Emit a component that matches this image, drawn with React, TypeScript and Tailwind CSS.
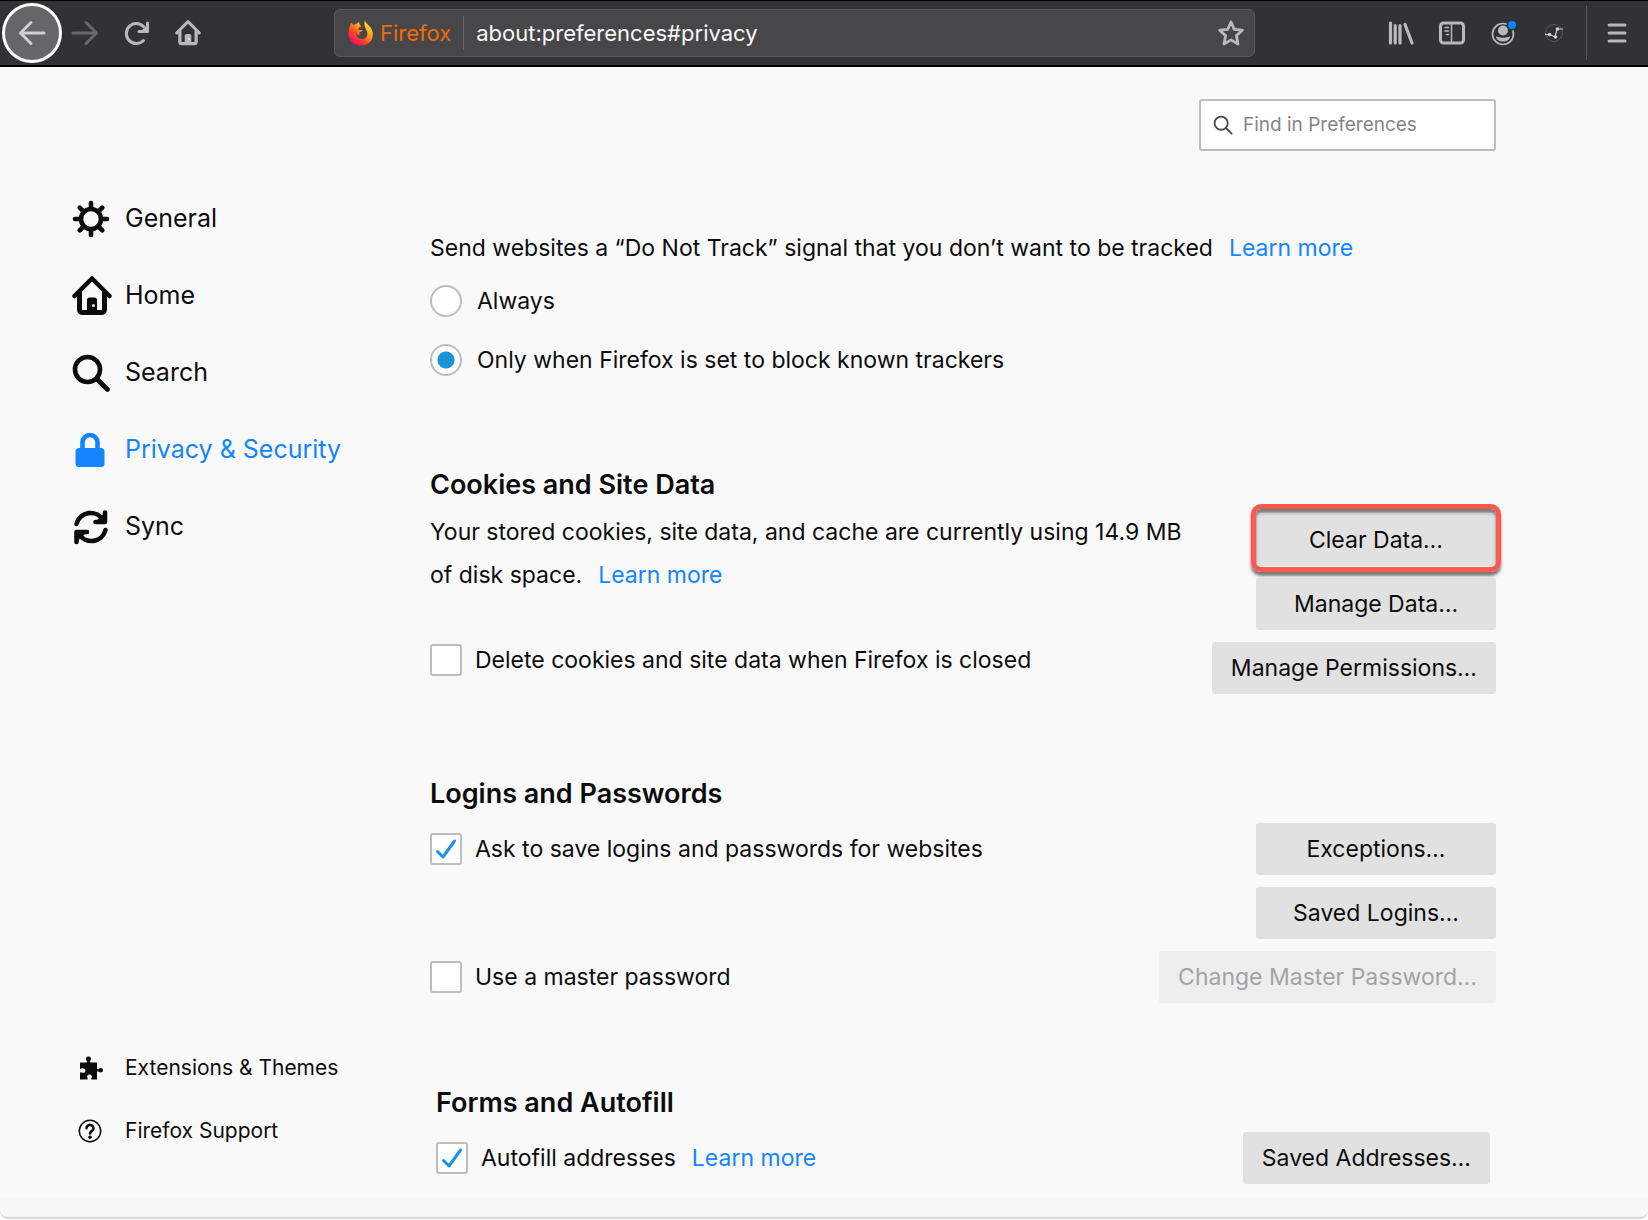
import React, { useState } from 'react';

const uiFont = 'font-[Inter,"Liberation_Sans",sans-serif]';

const HomeIcon = ({ size }: { size: number }) => (
  <svg width={size} height={size} viewBox="0 0 40 40" fill="none" stroke="currentColor" strokeLinecap="round" strokeLinejoin="round">
    <path d="M2.5 20 20 2.5 37.5 20" strokeWidth="4.5" />
    <path d="M7.5 17v16.5a3 3 0 0 0 3 3h19a3 3 0 0 0 3-3V17" strokeWidth="5" />
    <path d="M15 36V24a2.500 2.500 0 0 1 2.500-2.500h5A2.500 2.500 0 0 1 25 24v12z" fill="currentColor" stroke="none" />
    <circle cx="21.5" cy="29.5" r="1.5" fill="#e8e8e8" stroke="none" />
  </svg>
);

const GearIcon = () => (
  <svg width="38" height="38" viewBox="0 0 38 38" fill="none" stroke="currentColor" strokeLinecap="round" strokeWidth="4.6">
    <circle cx="19" cy="19" r="10" />
    <path d="M19 3v4M19 31v4M3 19h4M31 19h4M7.700 7.700l3 3M27.300 27.300l3 3M30.300 7.700l-3 3M10.700 27.300l-3 3" />
  </svg>
);

const SearchIcon = ({ size, weight }: { size: number; weight: number }) => (
  <svg width={size} height={size} viewBox="0 0 38 38" fill="none" stroke="currentColor" strokeLinecap="round" strokeWidth={weight}>
    <circle cx="15.5" cy="15.5" r="12.5" />
    <path d="M25 25l10.500 10.500" />
  </svg>
);

const LockIcon = () => (
  <svg width="38" height="38" viewBox="0 0 38 38">
    <path d="M10.500 18v-6.500a7.500 7.500 0 0 1 15 0V18" fill="none" stroke="currentColor" strokeWidth="4.6" />
    <rect x="3.5" y="17" width="29" height="19" rx="3.5" fill="currentColor" />
  </svg>
);

const SyncIcon = () => (
  <svg width="38" height="38" viewBox="0 0 38 38" fill="none" stroke="currentColor" strokeLinecap="round" strokeLinejoin="round" strokeWidth="4.6">
    <path d="M4.500 16A14.500 14.500 0 0 1 31 12" />
    <path d="M33 4.500V14H23z" fill="currentColor" strokeWidth="0" />
    <path d="M33 4.500V14H23.500" />
    <path d="M33.500 22A14.500 14.500 0 0 1 7 26" />
    <path d="M4.500 34v-10H15z" fill="currentColor" strokeWidth="0" />
    <path d="M4.500 34v-10H15" />
  </svg>
);

const PuzzleIcon = () => (
  <svg width="24" height="24" viewBox="0 0 24 24" fill="currentColor">
    <path d="M1 6.500h6c1.300 0 1.300-.8.800-1.500C6 2.500 7.500.5 9.500.5s3.500 2 1.700 4.500c-.5.700-.5 1.500.8 1.500h6v6c0 1 .8 1 1.500.5 2-1.700 4.500-1 4.500 1.200s-2.500 3-4.500 1.300c-.7-.5-1.500-.5-1.500.5v7.500h-5c-1 0-1-.8-.5-1.500 1-1.500 0-3.500-2-3.500s-3 2-2 3.500c.5.700.5 1.500-.5 1.500H1v-6.500c0-1 .8-1 1.500-.5 2 1 4-.2 4-2s-2-3-4-2c-.7.500-1.500.5-1.500-.5z" />
  </svg>
);

const HelpIcon = () => (
  <svg width="24" height="24" viewBox="0 0 24 24" fill="none" stroke="currentColor" strokeLinecap="round">
    <circle cx="12" cy="12" r="10.7" strokeWidth="1.5" />
    <path d="M8.500 9.200a3.500 3.300 0 1 1 5.300 2.800c-1.200.7-1.800 1.200-1.800 2.500" strokeWidth="2.6" />
    <circle cx="12" cy="18.2" r="1.8" fill="currentColor" stroke="none" />
  </svg>
);

const FirefoxLogo = () => (
  <svg width="26" height="26" viewBox="0 0 26 26">
    <defs>
      <linearGradient id="flame" x1="0.85" y1="0.1" x2="0.2" y2="0.9">
        <stop offset="0" stopColor="#ffe226" />
        <stop offset="0.35" stopColor="#ffa01a" />
        <stop offset="0.65" stopColor="#ff4a2a" />
        <stop offset="1" stopColor="#ff0a5e" />
      </linearGradient>
    </defs>
    <path d="M17 .5c.5 2.500 4 4.500 6 7.500 4.500 7.500.5 17.500-10 17.500C5 25.500.5 20 .5 13.500.5 9 2 6 3 2.500L5.500 5C7.500 4 9.500 3.500 11 1.500c0 2 .5 3 2.500 5-2 .5-3.500 1.500-3 3.500h4c-.5 1.500-2 2-3 2.500-.5 1 0 2 1 2.500-1.500.5-3.500 0-4.500-1.500.5 4 3.500 5.500 6 5.500 5 0 6.500-4.500 4.500-8.500C17 7.500 15.500 4.500 17 .5z" fill="url(#flame)" />
  </svg>
);

const LibraryIcon = () => (
  <svg width="26" height="26" viewBox="0 0 26 26" stroke="currentColor" strokeWidth="3.2" strokeLinecap="round">
    <path d="M2.500 3v20M7.200 5.500v17.500M12 5.500v17.500M17 4.500l7 18.500" />
  </svg>
);

const SidebarIcon = () => (
  <svg width="26" height="26" viewBox="0 0 26 26" fill="none" stroke="currentColor" strokeLinecap="round">
    <rect x="1.5" y="3" width="23" height="20" rx="3" strokeWidth="3" />
    <path d="M12.500 3v20M6 7.500h3.500M6 11h3.500M7.500 14.500h2" strokeWidth="1.5" />
  </svg>
);

const AccountIcon = () => (
  <svg width="26" height="26" viewBox="0 0 26 26" fill="none">
    <circle cx="12" cy="14" r="10.5" stroke="currentColor" strokeWidth="1.7" />
    <circle cx="12" cy="10.5" r="5" fill="currentColor" />
    <path d="M5 16.500c1.500 0 2.500 1.200 7 1.200s5.500-1.200 7-1.200c0 3-3.500 5-7 5s-7-2-7-5z" fill="currentColor" />
    <circle cx="21" cy="5" r="5.5" fill="#323234" />
    <circle cx="21" cy="5" r="4" fill="#0a84ff" />
  </svg>
);

const GraphIcon = () => (
  <svg width="20" height="20" viewBox="0 0 20 20" fill="none">
    <circle cx="10" cy="10" r="8.5" stroke="#58585a" />
    <path d="M1 11.500h5l5 2.500 2-8h6" stroke="#d0d0d2" strokeWidth="1.2" />
    <circle cx="5.5" cy="11.5" r="1.8" fill="#d0d0d2" />
    <circle cx="11.5" cy="14" r="1.8" fill="#d0d0d2" />
    <circle cx="13.5" cy="6" r="1.8" fill="#d0d0d2" />
  </svg>
);

const navItems = [
  { label: 'General', icon: <GearIcon /> },
  { label: 'Home', icon: <HomeIcon size={40} /> },
  { label: 'Search', icon: <SearchIcon size={38} weight={4.6} /> },
  { label: 'Privacy & Security', icon: <LockIcon /> },
  { label: 'Sync', icon: <SyncIcon /> },
];

const Toolbar = () => (
  <header className="flex h-[67px] shrink-0 items-center border-t border-b-2 border-black bg-[#323234] text-[#b9b9bb]">
    <div className="flex items-center">
      <button aria-label="Back" className="ml-[2px] flex size-[60px] items-center justify-center rounded-full border-[3px] border-white bg-[#666668] text-[#d0d0d2]">
        <svg width="28" height="26" viewBox="0 0 28 26" fill="none" stroke="currentColor" strokeWidth="3" strokeLinecap="round" strokeLinejoin="round">
          <path d="M26 13H2.500M13 2.500 2.500 13 13 23.500" />
        </svg>
      </button>
      <button aria-label="Forward" className="ml-[9px] text-[#68686a]">
        <svg width="28" height="26" viewBox="0 0 28 26" fill="none" stroke="currentColor" strokeWidth="3" strokeLinecap="round" strokeLinejoin="round">
          <path d="M2 13h23.500M15 2.500 25.500 13 15 23.500" />
        </svg>
      </button>
      <button aria-label="Reload" className="ml-[25px]">
        <svg width="26" height="26" viewBox="0 0 26 26" fill="none" stroke="currentColor" strokeWidth="3" strokeLinecap="round" strokeLinejoin="round">
          <path d="M19.500 20.500A10 10 0 1 1 19.500 6.500" />
          <path d="M23.500 3v8.500H15" />
          <path d="M24 4v8h-8z" fill="currentColor" strokeWidth="0" />
        </svg>
      </button>
      <button aria-label="Home" className="ml-[25px]"><HomeIcon size={26} /></button>
    </div>
    <div className="ml-[133px] flex h-12 w-[921px] items-center rounded-md border border-[#5a5a5c] bg-[#474749] pr-[10px] pl-[13px]">
      <FirefoxLogo />
      <span className="ml-[6px] text-[22px] text-[#ee6a0b]">Firefox</span>
      <span className="mx-3 h-[34px] w-px bg-[#66666e]" />
      <input aria-label="Address" defaultValue="about:preferences#privacy" className="min-w-0 flex-1 bg-transparent text-[22px] text-[#f9f9fa] outline-none" />
      <button aria-label="Bookmark this page">
        <svg width="26" height="26" viewBox="0 0 26 26" fill="none" stroke="currentColor" strokeWidth="2.8" strokeLinejoin="round">
          <path d="M13 2l3.300 7.300 8 .9-5.900 5.400 1.600 8.400-7-4.100L6 24l1.600-8.400-5.900-5.400 8-.9z" />
        </svg>
      </button>
    </div>
    <div className="ml-auto flex h-full items-center">
      <button aria-label="Library"><LibraryIcon /></button>
      <button aria-label="Sidebars" className="ml-[25px]"><SidebarIcon /></button>
      <button aria-label="Account" className="ml-[26px]"><AccountIcon /></button>
      <button aria-label="Graph" className="ml-[27px]"><GraphIcon /></button>
      <span className="ml-[22px] h-[54px] w-px bg-[#58585a]" />
      <button aria-label="Menu" className="mr-[21px] ml-5">
        <svg width="20" height="22" viewBox="0 0 20 22" stroke="currentColor" strokeWidth="3" strokeLinecap="round">
          <path d="M2 3h16M2 11h16M2 19h16" />
        </svg>
      </button>
    </div>
  </header>
);

const LearnMore = () => <a href="#learn" className="ml-4 text-[#1485ff]">Learn more</a>;

const PrefButton = ({ children, disabled }: { children: React.ReactNode; disabled?: boolean }) => (
  <button
    disabled={disabled}
    className="h-[52px] min-w-[240px] rounded-[3px] bg-[#e1e1e2] px-[19px] whitespace-nowrap disabled:bg-[#eeeeee] disabled:text-[#a3a3a5]"
  >
    {children}
  </button>
);

const Checkbox = ({ label, defaultChecked }: { label: string; defaultChecked?: boolean }) => {
  const [checked, setChecked] = useState(!!defaultChecked);

  return (
    <label className="flex items-center gap-[13px] leading-8">
      <span className="relative flex size-8">
        <input
          type="checkbox"
          checked={checked}
          onChange={() => setChecked(!checked)}
          className="size-8 appearance-none rounded-[3px] border-2 border-[#bdbdbe] bg-white"
        />
        {checked && (
          <svg className="pointer-events-none absolute inset-0" width="32" height="32" viewBox="0 0 32 32" fill="none" stroke="#1a94e0" strokeWidth="3" strokeLinecap="round" strokeLinejoin="round">
            <path d="M7.500 18.500l5.500 5.500L24.500 8" />
          </svg>
        )}
      </span>
      {label}
    </label>
  );
};

const Radio = ({ label, defaultChecked }: { label: string; defaultChecked?: boolean }) => (
  <label className="flex items-center gap-[15px] leading-8">
    <input
      type="radio"
      name="dnt"
      defaultChecked={defaultChecked}
      className="size-8 appearance-none rounded-full border-2 border-[#bdbdbe] bg-white checked:bg-[radial-gradient(circle,#1a94d9_8px,white_9px)]"
    />
    {label}
  </label>
);

const App = () => {
  const [active, setActive] = useState('Privacy & Security');

  return (
    <div className={`flex min-h-screen flex-col bg-[#f9f9fa] text-[23px] text-[#0c0c0d] ${uiFont}`}>
      <Toolbar />
      <div className="flex flex-1">
        <aside className="flex w-[430px] shrink-0 flex-col justify-between pt-[126px] pb-[51px] pl-[72px]">
          <nav className="flex flex-col gap-[25px] text-[25px]">
            {navItems.map(item => (
              <button
                key={item.label}
                onClick={() => setActive(item.label)}
                className={`flex h-[52px] items-center text-left ${active === item.label ? 'text-[#1485ff]' : ''}`}
              >
                <span className="w-[53px]">{item.icon}</span>
                {item.label}
              </button>
            ))}
          </nav>
          <div className="flex flex-col gap-[31px] text-[21px] leading-8">
            <a href="#extensions" className="flex items-center">
              <span className="w-[53px] pl-[7px]"><PuzzleIcon /></span>
              Extensions &amp; Themes
            </a>
            <a href="#support" className="flex items-center">
              <span className="w-[53px] pl-[6px]"><HelpIcon /></span>
              Firefox Support
            </a>
          </div>
        </aside>

        <main className="max-w-[1066px] flex-1">
          <div className="mt-8 flex justify-end">
            <label className="flex h-[52px] w-[297px] items-center rounded-[3px] border-2 border-[#bdbdbe] bg-white pl-3 text-[#4a4a4b]">
              <SearchIcon size={20} weight={3.5} />
              <input aria-label="Find in Preferences" placeholder="Find in Preferences" className="ml-[10px] min-w-0 flex-1 text-[19px] outline-none placeholder:text-[#858586]" />
            </label>
          </div>

          <section className="mt-[77px]">
            <p className="leading-10">
              Send websites a “Do Not Track” signal that you don’t want to be tracked
              <LearnMore />
            </p>
            <div className="mt-[17px] flex flex-col gap-[27px]">
              <Radio label="Always" />
              <Radio label="Only when Firefox is set to block known trackers" defaultChecked />
            </div>
          </section>

          <section className="mt-[89px]">
            <h2 className="text-[27px] leading-10 font-semibold">Cookies and Site Data</h2>
            <div className="flex justify-between">
              <div className="max-w-[780px]">
                <p className="mt-[6px] leading-[43px]">
                  Your stored cookies, site data, and cache are currently using 14.9 MB of disk space.
                  <LearnMore />
                </p>
                <div className="mt-[47px]"><Checkbox label="Delete cookies and site data when Firefox is closed" /></div>
              </div>
              <div className="flex flex-col items-end gap-3 pt-[9px]">
                <span className="relative flex">
                  <PrefButton>Clear Data…</PrefButton>
                  <span className="pointer-events-none absolute -inset-x-[5px] -top-[10px] -bottom-[6px] rounded-[10px] border-[5px] border-[#fc594f] shadow-[0_4px_3px_#7a7a7a,inset_0_4px_3px_#7a7a7a]" />
                </span>
                <PrefButton>Manage Data…</PrefButton>
                <PrefButton>Manage Permissions…</PrefButton>
              </div>
            </div>
          </section>

          <section className="mt-[80px]">
            <h2 className="text-[27px] leading-10 font-semibold">Logins and Passwords</h2>
            <div className="mt-[9px] flex flex-col gap-3">
              <div className="flex items-center justify-between">
                <Checkbox label="Ask to save logins and passwords for websites" defaultChecked />
                <PrefButton>Exceptions…</PrefButton>
              </div>
              <div className="flex justify-end"><PrefButton>Saved Logins…</PrefButton></div>
              <div className="flex items-center justify-between">
                <Checkbox label="Use a master password" />
                <PrefButton disabled>Change Master Password…</PrefButton>
              </div>
            </div>
          </section>

          <section className="mt-[80px] px-[6px]">
            <h2 className="text-[27px] leading-10 font-semibold">Forms and Autofill</h2>
            <div className="mt-[9px] flex items-center justify-between">
              <div className="flex items-center">
                <Checkbox label="Autofill addresses" defaultChecked />
                <LearnMore />
              </div>
              <PrefButton>Saved Addresses…</PrefButton>
            </div>
          </section>
        </main>
      </div>
      <footer className="h-[22px] bg-white">
        <div className="h-[21px] rounded-b-lg border-b-2 border-[#d8d8d9] bg-[#f7f7f8]" />
      </footer>
    </div>
  );
};

export default App;
